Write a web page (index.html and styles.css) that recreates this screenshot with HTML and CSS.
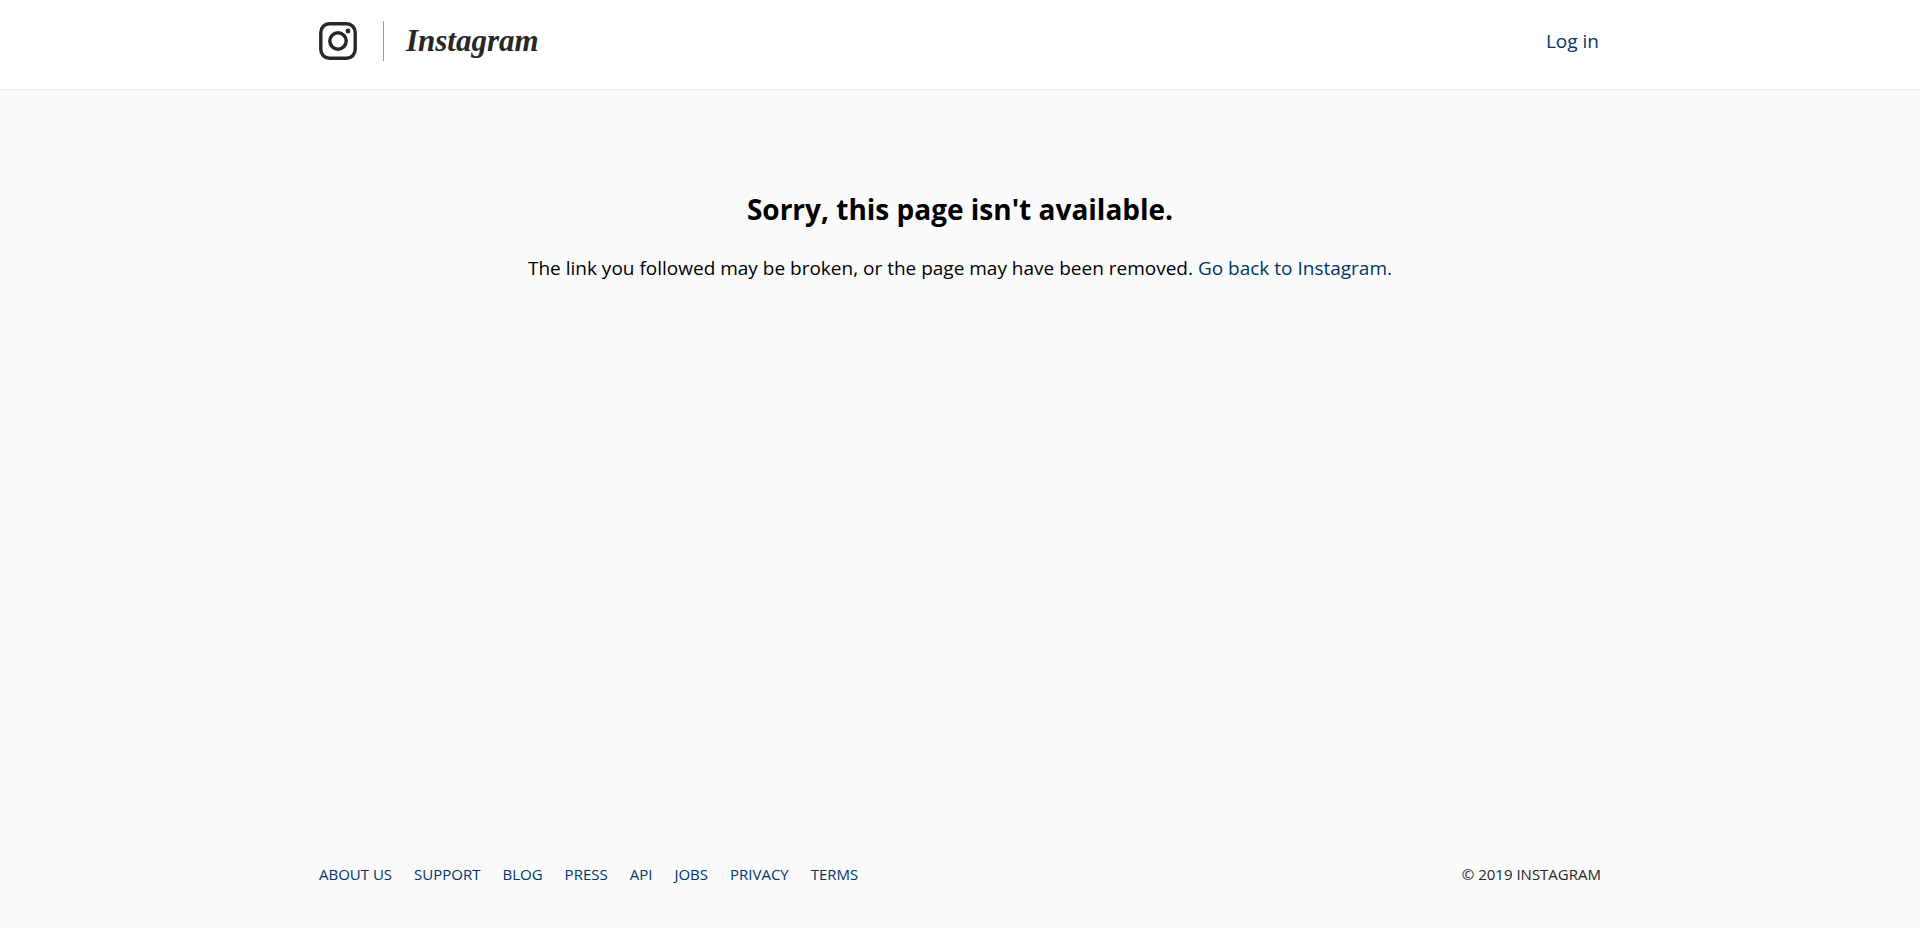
FILE: index.html
```html
<!DOCTYPE html>
<html lang="en">
<head>
<meta charset="utf-8">
<meta name="viewport" content="width=device-width, initial-scale=1">
<title>Page Not Found • Instagram</title>
<link rel="stylesheet" href="styles.css">
</head>
<body>
<header class="site-header">
  <div class="container header-row">
    <a class="brand" href="#">
      <svg class="brand-icon" viewBox="0 0 38 38" aria-hidden="true">
        <rect x="1.8" y="1.8" width="34.4" height="34.4" rx="8.6" fill="none" stroke="#262626" stroke-width="3.4"/>
        <circle cx="19" cy="19" r="8.2" fill="none" stroke="#262626" stroke-width="3.4"/>
        <circle cx="29" cy="9" r="2.4" fill="#262626"/>
      </svg>
      <span class="brand-divider"></span>
      <span class="brand-name">Instagram</span>
    </a>
    <a class="login" href="#">Log in</a>
  </div>
</header>
<main class="message">
  <h1 class="message-title">Sorry, this page isn't available.</h1>
  <p class="message-text">The link you followed may be broken, or the page may have been removed. <a href="#">Go back to Instagram.</a></p>
</main>
<footer class="site-footer">
  <div class="container footer-row">
    <nav class="footer-nav">
      <a href="#">About us</a>
      <a href="#">Support</a>
      <a href="#">Blog</a>
      <a href="#">Press</a>
      <a href="#">API</a>
      <a href="#">Jobs</a>
      <a href="#">Privacy</a>
      <a href="#">Terms</a>
    </nav>
    <span class="copyright">© 2019 Instagram</span>
  </div>
</footer>
</body>
</html>
```
FILE: styles.css
```css
* {
  box-sizing: border-box;
}

body {
  margin: 0;
  min-height: 100vh;
  display: flex;
  flex-direction: column;
  background: #fafafa;
  color: #000;
  font-family: "Segoe UI", "Open Sans", "Noto Sans", sans-serif;
  font-size: 19px;
  line-height: 28px;
}

a {
  color: #003569;
  text-decoration: none;
}

.container {
  width: 100%;
  max-width: 1322px;
  margin: 0 auto;
  padding: 0 20px;
}

.site-header {
  background: #fff;
  border-bottom: 1px solid #ededed;
}

.header-row {
  display: flex;
  align-items: center;
  justify-content: space-between;
  padding-top: 20px;
  padding-bottom: 27px;
}

.brand {
  display: flex;
  align-items: center;
  color: #262626;
}

.brand-icon {
  width: 38px;
  height: 38px;
}

.brand-divider {
  width: 1px;
  height: 40px;
  margin: 0 22px 0 26px;
  background: #999;
}

.brand-name {
  font-family: "Liberation Serif", serif;
  font-size: 31px;
  font-style: italic;
  font-weight: 700;
  line-height: 42px;
}

.login {
  padding-right: 2px;
}

.message {
  flex: 1;
  padding: 99px 20px 40px;
  text-align: center;
}

.message-title {
  margin: 0 0 25px;
  font-size: 28px;
  font-weight: 700;
  line-height: 40px;
}

.message-text {
  margin: 0;
}

.site-footer {
  padding-bottom: 42px;
  font-size: 15px;
  line-height: 24px;
  text-transform: uppercase;
}

.footer-row {
  display: flex;
  flex-wrap: wrap;
  justify-content: space-between;
}

.footer-nav {
  display: flex;
  flex-wrap: wrap;
  gap: 0 22px;
}

.copyright {
  color: #262626;
}
```
